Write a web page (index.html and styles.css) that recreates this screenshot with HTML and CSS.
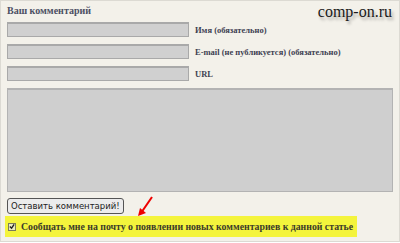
FILE: index.html
```html
<!DOCTYPE html>
<html lang="ru">
<head>
    <meta charset="UTF-8">
    <title>Ваш комментарий</title>
    <link rel="stylesheet" href="styles.css">
</head>
<body>
    <div class="comment-box">
        <h3>Ваш комментарий</h3>

        <div class="field-row">
            <input type="text" class="field">
            <label>Имя (обязательно)</label>
        </div>
        <div class="field-row">
            <input type="text" class="field">
            <label>E-mail (не публикуется) (обязательно)</label>
        </div>
        <div class="field-row">
            <input type="text" class="field">
            <label>URL</label>
        </div>

        <textarea class="comment-text"></textarea>

        <button class="submit-btn">Оставить комментарий!</button>

        <div class="subscribe">
            <span class="check">
                <svg width="7" height="7" viewBox="0 0 7 7"><path d="M1 3.5 L3 5.5 L6 1" stroke="#222" stroke-width="1.6" fill="none"/></svg>
            </span>
            <span>Сообщать мне на почту о появлении новых комментариев к данной статье</span>
        </div>

        <div class="watermark">comp-on.ru</div>

        <!-- стрелка к галочке -->
        <svg class="arrow" width="20" height="22" viewBox="0 0 20 22">
            <path d="M16 1 L5 17" stroke="#e00" stroke-width="2" fill="none"/>
            <path d="M2 20 L4 12 L10 17 Z" fill="#e00"/>
        </svg>
    </div>
</body>
</html>
```

FILE: styles.css
```css
* {
    margin: 0;
    padding: 0;
    box-sizing: border-box;
}

body {
    background: #ffffff;
}

.comment-box {
    position: relative;
    width: 400px;
    height: 242px;
    padding: 5px 6px 0 6px;
    background: #f3f1ea;
    border: 1px solid #dcdad3;
    font-family: "Liberation Serif", "Times New Roman", serif;
}

h3 {
    font-size: 10px;
    font-weight: bold;
    color: #4b4f63;
    height: 16px;
    line-height: 10px;
}

.field-row {
    display: flex;
    align-items: center;
    gap: 6px;
    margin-bottom: 7px;
}

.field {
    width: 182px;
    height: 15px;
    background: #d0d0d0;
    border: 1px solid #a9a9a9;
    border-top-width: 2px;
}

.field-row label {
    font-size: 8.5px;
    font-weight: bold;
    color: #3e4152;
}

.comment-text {
    display: block;
    width: 386px;
    height: 104px;
    background: #cfcfcf;
    border: 1px solid #b3b3b3;
    border-top-width: 2px;
    resize: none;
}

.submit-btn {
    display: block;
    margin-top: 6px;
    height: 16px;
    padding: 0 3px;
    font-family: "DejaVu Sans", sans-serif;
    font-size: 8.5px;
    color: #222;
    background: #ececec;
    border: 1px solid #555;
    border-radius: 3px;
}

.subscribe {
    display: flex;
    align-items: center;
    gap: 5px;
    width: 352px;
    height: 21px;
    margin-top: 2px;
    margin-left: -2px;
    padding-left: 3px;
    background: #f4f43c;
    font-size: 9.8px;
    font-weight: bold;
    color: #3b3b2a;
    white-space: nowrap;
}

.check {
    display: flex;
    align-items: center;
    justify-content: center;
    width: 8px;
    height: 8px;
    background: #e9e9c0;
    border: 1px solid #7a7a5a;
}

.watermark {
    position: absolute;
    top: 2px;
    right: 7px;
    font-family: "Liberation Serif", "Times New Roman", serif;
    font-size: 16px;
    color: #1a1a1a;
    text-shadow: 2px 3px 3px rgba(0, 0, 0, 0.3);
}

.arrow {
    position: absolute;
    left: 135px;
    top: 195px;
}
```
